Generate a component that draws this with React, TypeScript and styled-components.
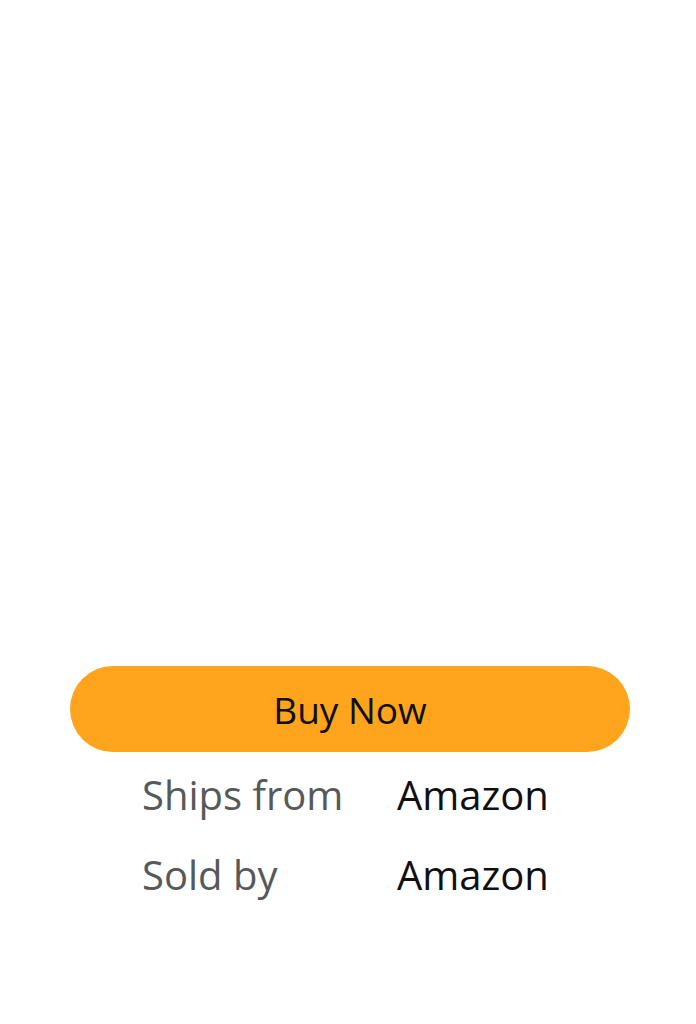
import React from 'react'
import styled, { createGlobalStyle } from 'styled-components'

const GlobalStyle = createGlobalStyle`
    html, body {
        margin: 0;
        padding: 0;
        background: #ffffff;
    }
    body {
        font-family: 'Open Sans', 'Noto Sans', sans-serif;
    }
`

export const Page = styled.div`
    width: 696px;
    height: 1024px;
    box-sizing: border-box;
    padding: 666px 66px 0 70px;
    display: flex;
    flex-direction: column;
`

export const BuyButton = styled.button`
    width: 560px;
    height: 86px;
    border: none;
    border-radius: 43px;
    background: #ffa41c;
    color: #0f1111;
    font-family: inherit;
    font-size: 37px;
    display: flex;
    align-items: center;
    justify-content: center;
    padding: 0;
    cursor: pointer;
`

export const Details = styled.div`
    margin-top: 2px;
    padding-left: 72px;
    display: grid;
    grid-template-columns: 255px auto;
    grid-auto-rows: 80px;
    align-items: center;
`

export const Label = styled.span`
    font-size: 40px;
    color: #565959;
`

export const Value = styled.span`
    font-size: 40px;
    color: #0f1111;
`

const rows = [
    { label: 'Ships from', value: 'Amazon' },
    { label: 'Sold by', value: 'Amazon' }
]

const App = () => {
    return (
        <Page>
            <GlobalStyle />
            <BuyButton>Buy Now</BuyButton>
            <Details>
                {rows.map(row => (
                    <React.Fragment key={row.label}>
                        <Label>{row.label}</Label>
                        <Value>{row.value}</Value>
                    </React.Fragment>
                ))}
            </Details>
        </Page>
    )
}

export default App
